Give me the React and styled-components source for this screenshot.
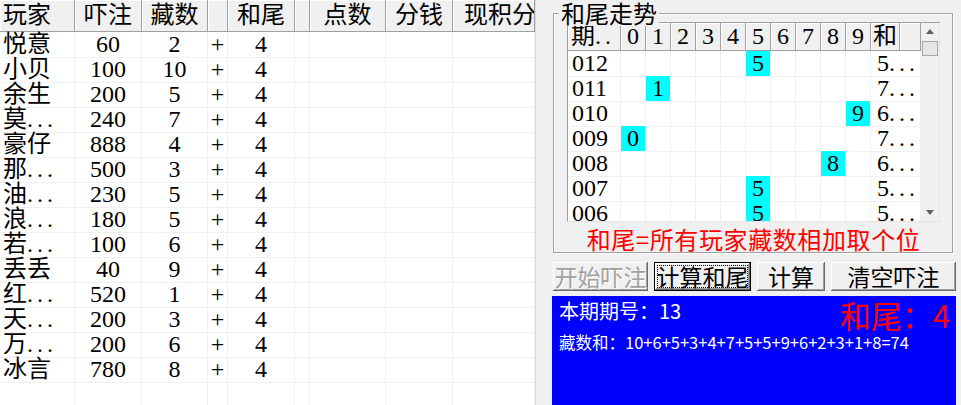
import React from 'react';
import styled, { createGlobalStyle } from 'styled-components';

const GlobalStyle = createGlobalStyle`
  html, body {
    margin: 0;
    padding: 0;
    background: #f0f0f0;
  }
  body {
    font-family: "Liberation Serif", "Noto Sans CJK SC", serif;
    color: #000;
  }
`;

const players = [
	['悦意', 60, 2],
	['小贝', 100, 10],
	['余生', 200, 5],
	['莫...', 240, 7],
	['豪仔', 888, 4],
	['那...', 500, 3],
	['油...', 230, 5],
	['浪...', 180, 5],
	['若...', 100, 6],
	['丢丢', 40, 9],
	['红...', 520, 1],
	['天...', 200, 3],
	['万...', 200, 6],
	['冰言', 780, 8],
];

const playerCols = [
	{ w: 75, head: '玩家', align: 'left', pad: 3 },
	{ w: 67, head: '吓注' },
	{ w: 66, head: '藏数' },
	{ w: 20, head: '' },
	{ w: 67, head: '和尾' },
	{ w: 15, head: '' },
	{ w: 76, head: '点数' },
	{ w: 67, head: '分钱' },
	{ w: 82, head: '现积分', align: 'left', pad: 11 },
];
const PLAYER_GRID = playerCols.map(c => c.w + 'px').join(' ');

// 走势: period, hit digit, sum
const trend = [
	['012', 5, '5'],
	['011', 1, '7'],
	['010', 9, '6'],
	['009', 0, '7'],
	['008', 8, '6'],
	['007', 5, '5'],
	['006', 5, '5'],
];
const TREND_HEAD_GRID = '53px repeat(10, 25px) 29px 1fr';
const TREND_BODY_GRID = '53px repeat(10, 25px) 1fr';

const Dots = styled.span`
	letter-spacing: 4px;
`;

const withDots = text => {
	if (!text.endsWith('...')) return text;
	return (
		<>
			{text.slice(0, -3)}
			<Dots>...</Dots>
		</>
	);
};

const App = () => {
	return (
		<>
			<GlobalStyle />
			<Window>
				<PlayerList>
					<GridRow $cols={PLAYER_GRID} $h={32}>
						{playerCols.map((c, i) => (
							<HeadCell key={i} $align={c.align} $pad={c.pad}>
								{c.head}
							</HeadCell>
						))}
					</GridRow>
					{[...players, null].map((p, r) => (
						<GridRow key={r} $cols={PLAYER_GRID} $h={25}>
							<Cell $align='left' $pad={3}>{p ? withDots(p[0]) : ''}</Cell>
							<Cell>{p ? p[1] : ''}</Cell>
							<Cell>{p ? p[2] : ''}</Cell>
							<Cell>{p ? '+' : ''}</Cell>
							<Cell>{p ? 4 : ''}</Cell>
							<Cell />
							<Cell />
							<Cell />
							<Cell />
						</GridRow>
					))}
				</PlayerList>

				<SideColumn>
					<GroupBox>
						<GroupTitle>和尾走势</GroupTitle>
						<TrendList>
							<TrendTable>
								<GridRow $cols={TREND_HEAD_GRID} $h={28}>
									<SmallHead $align='left' $pad={3}>期<Dots>..</Dots></SmallHead>
									{Array.from({ length: 10 }, (_, d) => (
										<SmallHead key={d}>{d}</SmallHead>
									))}
									<SmallHead $align='left' $pad={2}>和</SmallHead>
									<SmallHead />
								</GridRow>
								{trend.map(([period, hit, sum]) => (
									<GridRow key={period} $cols={TREND_BODY_GRID} $h={25}>
										<Cell $align='left' $pad={4}>{period}</Cell>
										{Array.from({ length: 10 }, (_, d) => (
											<Cell key={d} $hit={d === hit}>
												{d === hit ? d : ''}
											</Cell>
										))}
										<Cell $align='left' $pad={6}>
											{sum}
											<Dots>...</Dots>
										</Cell>
									</GridRow>
								))}
							</TrendTable>
							<ScrollBar>
								<ScrollArrow>
									<svg width='8' height='5' viewBox='0 0 8 5'>
										<path d='M0 5 L4 0 L8 5 Z' fill='#606060' />
									</svg>
								</ScrollArrow>
								<ScrollThumb />
								<ScrollTrack />
								<ScrollArrow>
									<svg width='8' height='5' viewBox='0 0 8 5'>
										<path d='M0 0 L4 5 L8 0 Z' fill='#606060' />
									</svg>
								</ScrollArrow>
							</ScrollBar>
						</TrendList>
						<RuleText>和尾=所有玩家藏数相加取个位</RuleText>
					</GroupBox>

					<ButtonRow>
						<ActionButton $w={95} disabled>开始吓注</ActionButton>
						<ActionButton $w={97} $default>计算和尾</ActionButton>
						<ActionButton $w={68}>计算</ActionButton>
						<ActionButton $w={125}>清空吓注</ActionButton>
					</ButtonRow>

					<ResultPanel>
						<ResultTop>
							<PeriodText>本期期号：13</PeriodText>
							<TailText>和尾：4</TailText>
						</ResultTop>
						<SumText>藏数和：10+6+5+3+4+7+5+5+9+6+2+3+1+8=74</SumText>
					</ResultPanel>
				</SideColumn>
			</Window>
		</>
	);
};

export default App;

const Window = styled.div`
	display: flex;
	gap: 16px;
	width: 961px;
	height: 405px;
	overflow: hidden;
	background: #f0f0f0;
`;

const PlayerList = styled.div`
	flex: none;
	width: 535px;
	height: 405px;
	background: #fff;
	border-right: 1px solid #dadada;
	overflow: hidden;
	font-size: 24px;
`;

const GridRow = styled.div`
	display: grid;
	grid-template-columns: ${p => p.$cols};
	height: ${p => p.$h}px;
`;

const HeadCell = styled.div`
	background: #f0f0f0;
	border-right: 1px solid #a0a0a0;
	border-bottom: 1px solid #a0a0a0;
	box-shadow: inset 1px 1px 0 #fff;
	line-height: 31px;
	text-align: ${p => p.$align || 'center'};
	padding-left: ${p => p.$pad || 0}px;
	white-space: nowrap;
	overflow: hidden;
`;

const SmallHead = styled(HeadCell)`
	line-height: 27px;
`;

const Cell = styled.div`
	border-right: 1px solid #f0f0f0;
	border-bottom: 1px solid #f0f0f0;
	background: ${p => (p.$hit ? '#00ffff' : 'transparent')};
	line-height: 25px;
	text-align: ${p => p.$align || 'center'};
	padding-left: ${p => p.$pad || 0}px;
	white-space: nowrap;
`;

const SideColumn = styled.div`
	flex: none;
	width: 404px;
	display: flex;
	flex-direction: column;
`;

const GroupBox = styled.div`
	position: relative;
	flex: none;
	height: 240px;
	margin: 13px 3px 0 1px;
	padding: 8px 12px 0 13px;
	box-sizing: border-box;
	border: 1px solid #a0a0a0;
	box-shadow: inset 1px 1px 0 #fff, 1px 1px 0 #fff;
	display: flex;
	flex-direction: column;
`;

const GroupTitle = styled.div`
	position: absolute;
	top: -14px;
	left: 5px;
	padding: 0 2px;
	background: #f0f0f0;
	font-family: "Noto Sans CJK SC", sans-serif;
	font-size: 24px;
	line-height: 26px;
`;

const TrendList = styled.div`
	display: flex;
	height: 201px;
	box-sizing: border-box;
	background: #fff;
	border: 1px solid;
	border-color: #a0a0a0 #e3e3e3 #e3e3e3 #a0a0a0;
	overflow: hidden;
	font-size: 24px;
`;

const TrendTable = styled.div`
	flex: 1;
	overflow: hidden;
`;

const ScrollBar = styled.div`
	width: 18px;
	flex: none;
	display: flex;
	flex-direction: column;
	background: #f0f0f0;
`;

const ScrollArrow = styled.div`
	height: 17px;
	display: grid;
	place-items: center;
`;

const ScrollThumb = styled.div`
	height: 15px;
	margin: 1px 1px 0 1px;
	background: #e6e6e6;
	border: 1px solid #a8a8a8;
	box-sizing: border-box;
`;

const ScrollTrack = styled.div`
	flex: 1;
`;

const RuleText = styled.div`
	margin-top: 4px;
	text-align: center;
	color: #ff0000;
	font-family: "Noto Sans CJK SC", sans-serif;
	font-size: 24px;
	letter-spacing: 0.6px;
	line-height: 26px;
`;

const ButtonRow = styled.div`
	display: flex;
	gap: 6px;
	margin: 9px 0 0 1px;
	height: 29px;
`;

const ActionButton = styled.button`
	width: ${p => p.$w}px;
	height: 29px;
	padding: 0;
	background: #f0f0f0;
	border: ${p => (p.$default ? '1px solid #000' : 'none')};
	box-shadow: inset -1px -1px 0 #696969, inset 1px 1px 0 #fff, inset -2px -2px 0 #a0a0a0;
	outline: ${p => (p.$default ? '1px dotted #000' : 'none')};
	outline-offset: -4px;
	font-family: "Noto Sans CJK SC", sans-serif;
	font-size: 23px;
	line-height: 27px;
	color: #000;
	white-space: nowrap;
	overflow: hidden;

	&:disabled {
		color: #a0a0a0;
		text-shadow: 1px 1px 0 #fff;
	}
`;

const ResultPanel = styled.div`
	flex: 1;
	margin-top: 5px;
	padding: 2px 6px 0 7px;
	background: #0000ff;
	color: #fff;
	font-family: "Noto Sans CJK SC", sans-serif;
`;

const ResultTop = styled.div`
	display: flex;
	justify-content: space-between;
	align-items: flex-start;
`;

const PeriodText = styled.div`
	font-size: 20px;
	line-height: 26px;
`;

const TailText = styled.div`
	color: #ff0000;
	font-size: 31px;
	line-height: 34px;
`;

const SumText = styled.div`
	font-size: 16.5px;
	line-height: 20px;
`;
